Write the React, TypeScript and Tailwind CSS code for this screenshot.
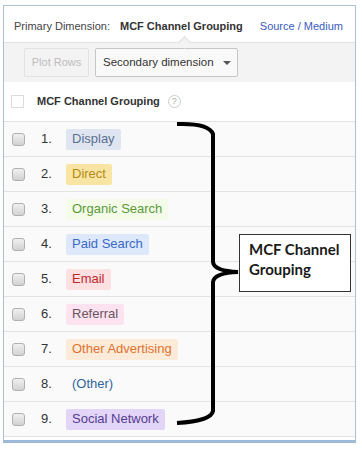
import React from "react";

const rows = [
  { n: 1, label: "Display", bg: "bg-[#dfe6f2]", fg: "text-[#5b6f8f]" },
  { n: 2, label: "Direct", bg: "bg-[#f8e5a4]", fg: "text-[#b78a12]" },
  { n: 3, label: "Organic Search", bg: "bg-[#f4fbe8]", fg: "text-[#5a9a3a]" },
  { n: 4, label: "Paid Search", bg: "bg-[#dde8fb]", fg: "text-[#3c68c8]" },
  { n: 5, label: "Email", bg: "bg-[#fde0e2]", fg: "text-[#c0272d]" },
  { n: 6, label: "Referral", bg: "bg-[#fce3ef]", fg: "text-[#6a5563]" },
  { n: 7, label: "Other Advertising", bg: "bg-[#fdebd9]", fg: "text-[#e0722f]" },
  { n: 8, label: "(Other)", bg: "bg-transparent", fg: "text-[#31649a]" },
  { n: 9, label: "Social Network", bg: "bg-[#e2d5f7]", fg: "text-[#553b92]" },
];

export default function App() {
  return (
    <div
      className="relative w-[362px] h-[450px] bg-white overflow-hidden whitespace-nowrap"
      style={{ fontFamily: '"Liberation Sans", Arial, sans-serif' }}
    >
      <div className="ml-[3px] mt-[5px] w-[353px] border border-[#aac0d6] border-b-[3px] border-b-[#9dbbd8] bg-white">
        {/* Header row */}
        <div className="relative h-[36px] flex items-center pl-[10px] pt-[4px] text-[11px] text-[#444]">
          <span className="shrink-0">Primary Dimension:</span>
          <span className="shrink-0 ml-[10px] font-bold text-[#333]">MCF Channel Grouping</span>
          <span className="shrink-0 ml-[17px] text-[#3a5bbf]">Source / Medium</span>
          <div className="absolute left-[176px] bottom-[-5px] w-[9px] h-[9px] rotate-45 bg-[#f3f3f3] border-l border-t border-[#dddddd]" />
        </div>
        {/* Toolbar */}
        <div className="h-[40px] bg-[#f3f3f3] border-t border-[#e2e2e2] flex items-center pl-[20px] gap-[6px]">
          <div className="shrink-0 w-[65px] h-[29px] border border-[#e2e2e2] rounded-[2px] flex items-center justify-center text-[11px] text-[#bdbdbd]">
            Plot Rows
          </div>
          <div className="shrink-0 w-[143px] h-[29px] border border-[#c6c6c6] rounded-[2px] bg-[#f9f9f9] flex items-center pl-[7px] text-[11.5px] text-[#333]">
            <span className="shrink-0">Secondary dimension</span>
            <span className="shrink-0 ml-[9px] w-0 h-0 border-l-[4px] border-r-[4px] border-t-[4px] border-l-transparent border-r-transparent border-t-[#555]" />
          </div>
        </div>
        {/* Column header */}
        <div className="h-[40px] flex items-center border-b border-[#e3e3e3] bg-white">
          <div className="shrink-0 ml-[7px] w-[13px] h-[13px] border border-[#dcdcdc] bg-white" />
          <span className="shrink-0 ml-[13px] text-[11px] font-bold text-[#333]">MCF Channel Grouping</span>
          <span className="shrink-0 ml-[8px] w-[13px] h-[13px] rounded-full border border-[#cccccc] flex items-center justify-center text-[9px] text-[#aaa] leading-none">
            ?
          </span>
        </div>
        {/* Rows */}
        {rows.map((r) => (
          <div
            key={r.n}
            className="h-[35px] flex items-center border-b border-[#e3e3e3] bg-[#fafafa]"
          >
            <div className="shrink-0 ml-[8px] w-[13px] h-[13px] rounded-[3px] border border-[#b0b0b0] bg-gradient-to-b from-[#f0f0f0] to-[#d2d2d2]" />
            <span className="shrink-0 ml-[16px] w-[25px] text-[13px] text-[#333]">{r.n}.</span>
            <span className={`shrink-0 h-[21px] flex items-center px-[6px] rounded-[2px] text-[13px] ${r.bg} ${r.fg}`}>
              {r.label}
            </span>
          </div>
        ))}
        <div className="h-[3px] bg-white" />
      </div>

      {/* Annotation brace */}
      <svg className="absolute left-0 top-0" width="362" height="450" viewBox="0 0 362 450">
        <path
          d="M177 124 Q209 123 213 134 L213 262 Q214 271 238 272 Q214 273 213 282 L213 411 Q211 421 177 423"
          fill="none"
          stroke="#000"
          strokeWidth="4"
          strokeLinecap="butt"
        />
      </svg>
      <div
        className="absolute left-[239px] top-[234px] w-[112px] h-[58px] border border-[#333] bg-white pl-[9px] pt-[4px] text-[15px] font-bold leading-[20px] text-[#1a1a1a]"
        style={{ fontFamily: 'Lato, "Open Sans", sans-serif' }}
      >
        MCF Channel
        <br />
        Grouping
      </div>
    </div>
  );
}
